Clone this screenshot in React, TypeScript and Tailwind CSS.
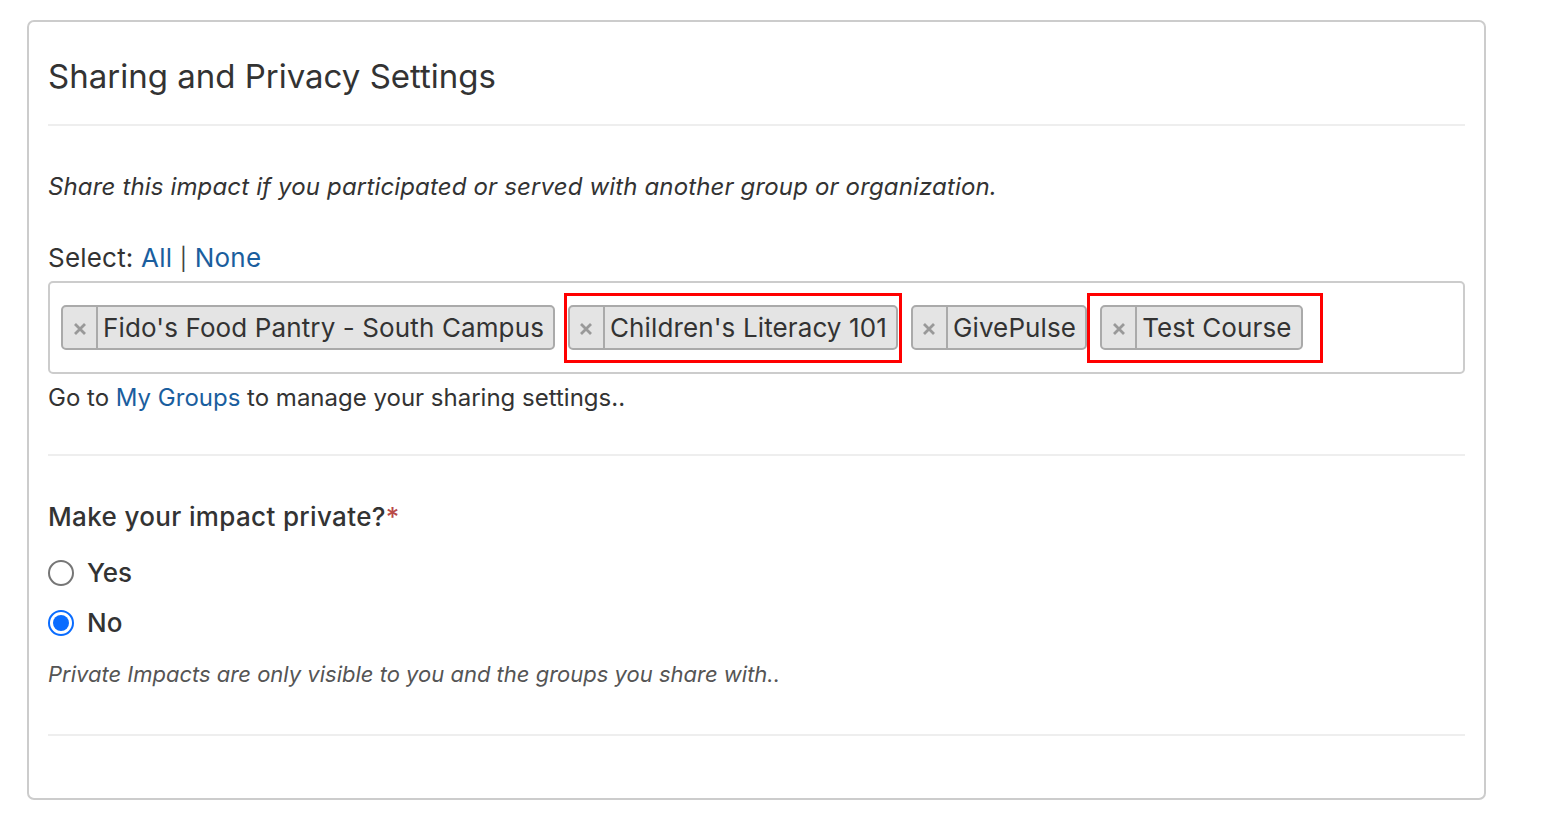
import React from 'react';

type TagItem = {
  label: string;
  mark?: string; // classes for the red annotation box around the tag
};

const tags: TagItem[] = [
  { label: "Fido's Food Pantry - South Campus" },
  { label: "Children's Literacy 101", mark: '-left-[4px] -right-[4px] -top-[12px] -bottom-[13px]' },
  { label: 'GivePulse' },
  { label: 'Test Course', mark: '-left-[13px] -right-[20px] -top-[12px] -bottom-[13px]' },
];

function Tag({ label, mark }: TagItem) {
  return (
    <div className="relative">
      <div className="flex h-[45px] items-stretch rounded-[5px] border-2 border-[#aaaaaa] bg-[#e4e4e4]">
        <span className="flex w-[35px] items-center justify-center border-r-2 border-[#aaaaaa]">
          <svg width="14" height="14" viewBox="0 0 14 14" className="mt-[2px]">
            <path d="M2 2 L12 12 M12 2 L2 12" stroke="#999999" strokeWidth="2.8" strokeLinecap="butt" />
          </svg>
        </span>
        <span className="flex items-center pl-[5px] pr-[9px] text-[26px] tracking-[0.12px] text-[#333333]">{label}</span>
      </div>
      {mark && <div className={`pointer-events-none absolute border-[3px] border-[#ff0000] ${mark}`} />}
    </div>
  );
}

export default function App() {
  return (
    <div className="min-h-screen bg-white pl-[27px] pt-[20px] font-['Inter',sans-serif] text-[#333333]">
      <div className="w-[1459px] rounded-[7px] border-2 border-[#cccccc] px-[19px] pb-[62px]">
        {/* Header */}
        <div className="border-b-2 border-[#eeeeee] pb-[24px] pt-[30px]">
          <h1 className="text-[33px] font-normal leading-[48px] text-[#333333]">Sharing and Privacy Settings</h1>
        </div>

        {/* Sharing */}
        <div className="border-b-2 border-[#eeeeee] pb-[39px] pt-[46px]">
          <p className="text-[24px] italic leading-[30px] tracking-[0.15px]">
            Share this impact if you participated or served with another group or organization.
          </p>
          <div className="mt-[41px] h-[30px] text-[26px] leading-[30px] tracking-[0.2px]">
            Select: <a className="text-[#1a5e9e]">All</a> <span className="text-[22px] leading-none text-[#444444]">|</span>{' '}
            <a className="text-[#1a5e9e]">None</a>
          </div>
          <div className="mt-[8px] flex h-[93px] items-center gap-[13px] rounded-[5px] border-2 border-[#cccccc] pl-[11px]">
            {tags.map((t) => (
              <Tag key={t.label} label={t.label} mark={t.mark} />
            ))}
          </div>
          <p className="mt-[7px] text-[24px] leading-[34px]">
            Go to <a className="text-[#1a5e9e]">My Groups</a> to manage your sharing settings..
          </p>
        </div>

        {/* Privacy */}
        <div className="border-b-2 border-[#eeeeee] pb-[45px] pt-[43px]">
          <h3 className="text-[26px] font-medium leading-[36px] tracking-[0.35px]">
            Make your impact private?<span className="text-[#b94a48]">*</span>
          </h3>
          <div className="mt-[22px] flex flex-col gap-[18px]">
            <label className="flex items-center gap-[13px] text-[26px] font-medium leading-[32px]">
              <span className="h-[26px] w-[26px] rounded-full border-2 border-[#767676] bg-white" />
              Yes
            </label>
            <label className="flex items-center gap-[13px] text-[26px] font-medium leading-[32px]">
              <span className="flex h-[26px] w-[26px] items-center justify-center rounded-full border-2 border-[#0a6cff] bg-white">
                <span className="h-[16px] w-[16px] rounded-full bg-[#0a6cff]" />
              </span>
              No
            </label>
          </div>
          <p className="mt-[20px] text-[22px] italic leading-[30px] text-[#555555]">
            Private Impacts are only visible to you and the groups you share with..
          </p>
        </div>
      </div>
    </div>
  );
}
